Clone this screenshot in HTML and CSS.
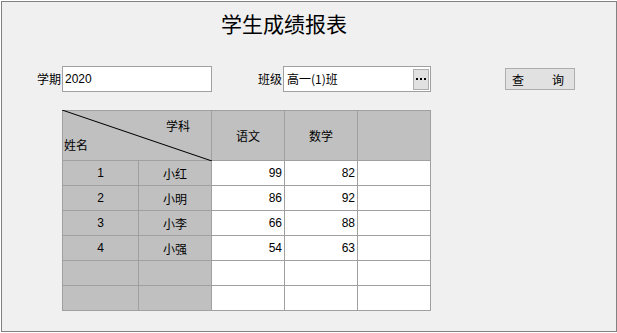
FILE: index.html
```html
<!DOCTYPE html>
<html lang="zh-CN">
<head>
    <meta charset="UTF-8">
    <title>学生成绩报表</title>
    <link rel="stylesheet" href="styles.css">
</head>
<body>
    <div class="window">
        <div class="title">学生成绩报表</div>

        <div class="query-row">
            <span class="label">学期</span>
            <div class="text-box term-box">2020</div>
            <span class="label class-label">班级</span>
            <div class="text-box class-box">
                <span class="class-value">高一(1)班</span>
                <span class="pick-btn">
                    <svg width="10" height="2" viewBox="0 0 10 2">
                        <rect x="0" y="0" width="2" height="2" fill="#000"/>
                        <rect x="4" y="0" width="2" height="2" fill="#000"/>
                        <rect x="8" y="0" width="2" height="2" fill="#000"/>
                    </svg>
                </span>
            </div>
            <div class="query-btn"><span>查</span><span>询</span></div>
        </div>

        <!-- 成绩表格 -->
        <div class="grid">
            <div class="cell gray corner">
                <svg class="diag" preserveAspectRatio="none" viewBox="0 0 150 50">
                    <line x1="0" y1="0" x2="150" y2="50" stroke="#000" stroke-width="1"/>
                </svg>
                <span class="corner-top">学科</span>
                <span class="corner-bottom">姓名</span>
            </div>
            <div class="cell gray center">语文</div>
            <div class="cell gray center">数学</div>
            <div class="cell gray"></div>

            <div class="cell gray center">1</div>
            <div class="cell gray center">小红</div>
            <div class="cell num">99</div>
            <div class="cell num">82</div>
            <div class="cell"></div>

            <div class="cell gray center">2</div>
            <div class="cell gray center">小明</div>
            <div class="cell num">86</div>
            <div class="cell num">92</div>
            <div class="cell"></div>

            <div class="cell gray center">3</div>
            <div class="cell gray center">小李</div>
            <div class="cell num">66</div>
            <div class="cell num">88</div>
            <div class="cell"></div>

            <div class="cell gray center">4</div>
            <div class="cell gray center">小强</div>
            <div class="cell num">54</div>
            <div class="cell num">63</div>
            <div class="cell"></div>

            <div class="cell gray"></div>
            <div class="cell gray"></div>
            <div class="cell"></div>
            <div class="cell"></div>
            <div class="cell"></div>

            <div class="cell gray"></div>
            <div class="cell gray"></div>
            <div class="cell"></div>
            <div class="cell"></div>
            <div class="cell"></div>
        </div>
    </div>
</body>
</html>
```

FILE: styles.css
```css
html, body {
    margin: 0;
    padding: 0;
    background-color: #fff;
}

body {
    font-family: "Liberation Sans", "Noto Sans CJK SC", sans-serif;
    font-size: 12px;
    color: #000;
}

.window {
    box-sizing: border-box;
    margin: 1px 0 0 1px;
    width: 616px;
    height: 331px;
    border: 1px solid #828282;
    background-color: #f0f0f0;
}

.title {
    font-family: "Noto Sans CJK SC", sans-serif;
    font-size: 21px;
    line-height: 24px;
    padding: 9px 0 0 219px;
    height: 24px;
}

.query-row {
    display: flex;
    align-items: flex-start;
    margin-top: 31px;
    padding-left: 35px;
    height: 26px;
}

.label {
    line-height: 26px;
    width: 24px;
    margin-right: 1px;
    font-family: "Noto Sans CJK SC", sans-serif;
}

.class-label {
    margin-left: 46px;
}

.text-box {
    box-sizing: border-box;
    height: 26px;
    border: 1px solid #a0a0a0;
    background-color: #fff;
    line-height: 24px;
    padding-left: 2px;
}

.term-box {
    width: 150px;
}

.class-box {
    width: 148px;
    display: flex;
    align-items: center;
    padding: 1px 1px 1px 3px;
    font-family: "Noto Sans CJK SC", sans-serif;
}

.class-value {
    flex-grow: 1;
}

.pick-btn {
    box-sizing: border-box;
    width: 16px;
    height: 21px;
    background-color: #e1e1e1;
    border: 1px solid #adadad;
    display: flex;
    justify-content: center;
    align-items: center;
}

.query-btn {
    box-sizing: border-box;
    margin: 2px 0 0 74px;
    width: 70px;
    height: 22px;
    background-color: #e1e1e1;
    border: 1px solid #adadad;
    display: flex;
    align-items: center;
    gap: 28px;
    padding-left: 6px;
    font-family: "Noto Sans CJK SC", sans-serif;
}

.grid {
    display: grid;
    grid-template-columns: 75px 72px 72px 72px 72px;
    grid-template-rows: 49px repeat(6, 24px);
    gap: 1px;
    padding: 1px;
    width: max-content;
    margin: 18px 0 0 60px;
    background-color: #a0a0a0;
}

.cell {
    background-color: #fff;
    font-family: "Liberation Sans", "Noto Sans CJK SC", sans-serif;
}

.gray {
    background-color: #c0c0c0;
}

.center {
    display: flex;
    justify-content: center;
    align-items: center;
}

.num {
    display: flex;
    justify-content: flex-end;
    align-items: center;
    padding-right: 2px;
}

.corner {
    grid-column: span 2;
    position: relative;
    display: flex;
    flex-direction: column;
    justify-content: space-between;
    padding: 7px 21px 7px 1px;
    font-family: "Noto Sans CJK SC", sans-serif;
    line-height: 16px;
}

.diag {
    position: absolute;
    left: -1px;
    top: -1px;
    width: 150px;
    height: 51px;
}

.corner-top {
    align-self: flex-end;
}

.corner-bottom {
    align-self: flex-start;
}
```
